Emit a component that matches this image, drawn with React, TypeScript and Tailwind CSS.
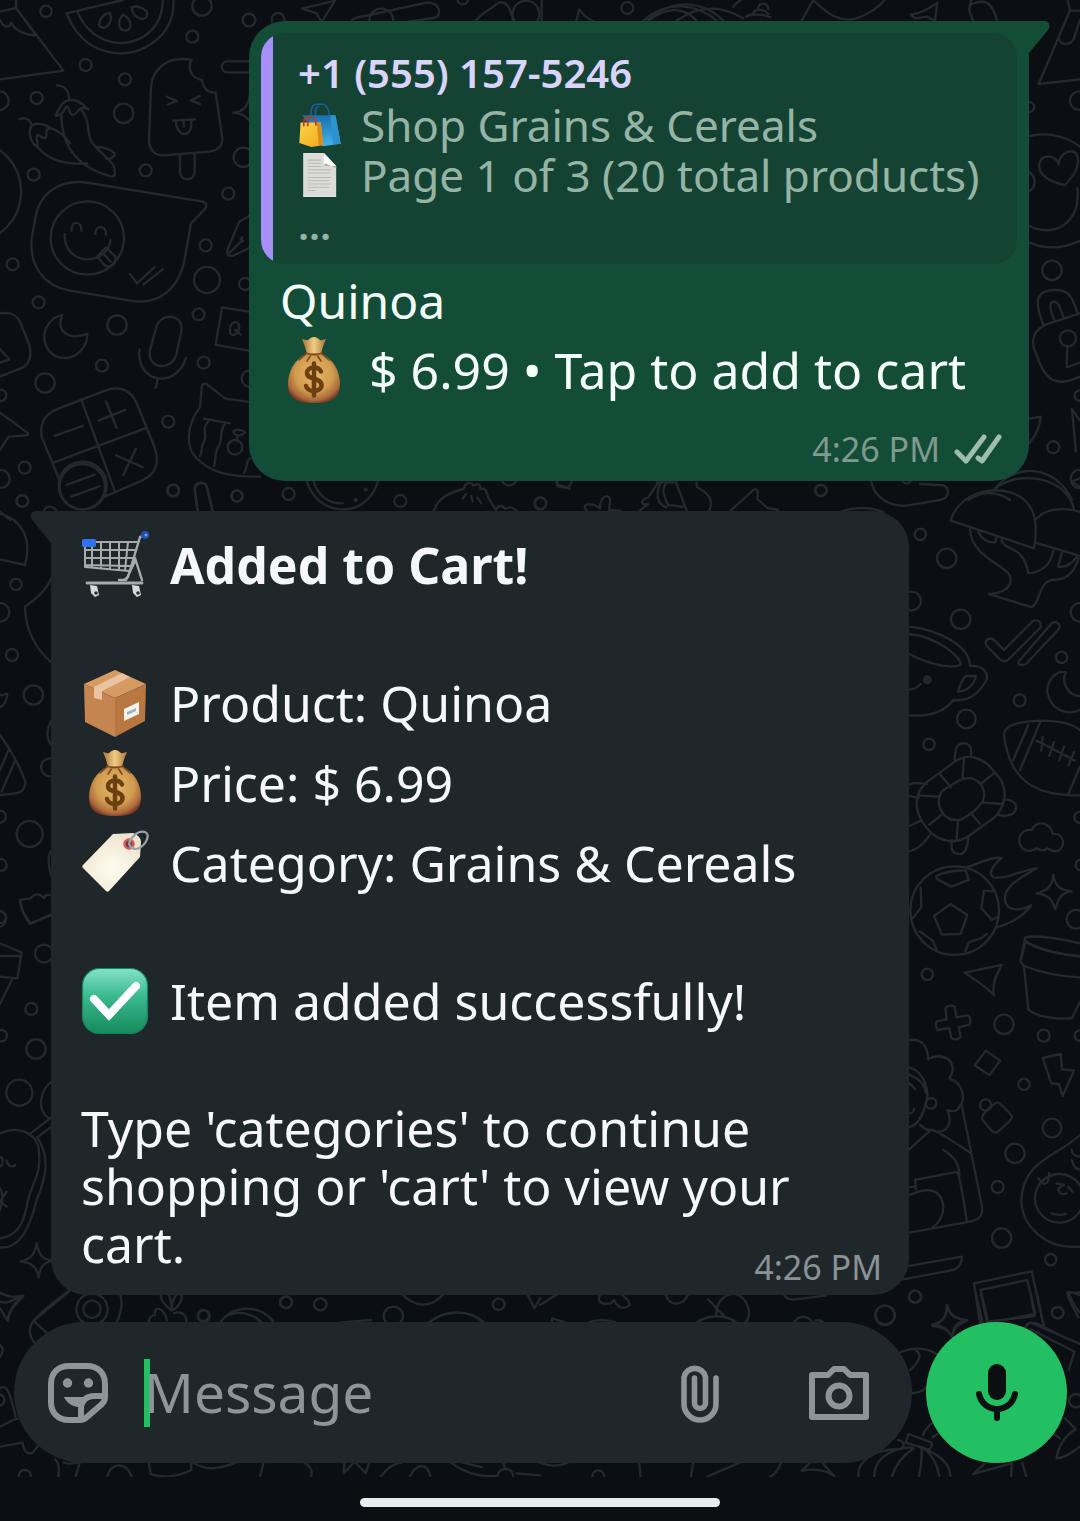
import type { ReactNode } from "react";

/* ---------- Wallpaper ---------- */

type Sheet = {
  transform: string;
  circles: [number, number, number][];
  lines: string[];
};

const sheets: Sheet[] = [
  {
    transform: "translate(0 0) scale(0.3333)",
    circles: [
      [138, 34, 17], [606, 18, 29], [747, 60, 19], [577, 110, 18], [257, 195, 18], [375, 238, 18],
      [110, 294, 18], [-2, 302, 28], [371, 340, 29], [437, 511, 18], [101, 524, 18], [730, 472, 29],
      [685, 581, 18], [617, 736, 18], [38, 793, 18], [621, 840, 39], [735, 852, 18], [116, 907, 18],
      [596, 943, 18], [351, 975, 29], [306, 1097, 18], [611, 1088, 18], [135, 1149, 29], [750, 1136, 25],
      [2, 1186, 17], [505, 1265, 18], [74, 1403, 18], [2, 1437, 27], [519, 1472, 18], [711, 1488, 16],
      [67, 1503, 18], [262, 714, 110], [705, 1342, 22], [248, 1457, 72], [-90, 575, 153], [150, 1540, 20],
    ],
    lines: [
      "M48 -5V24L190 212L0 238M0 34L48 24M48 24L108 106C75 105 45 92 34 68C28 86 12 84 0 60",
      "M368 0L200 40C255 180 385 170 430 145C495 115 525 60 520 -5M232 34C270 125 360 150 430 110C470 85 490 50 488 -5",
      "M331 40C310 38 295 62 298 78C316 92 338 72 331 40M370 44C352 60 352 92 377 92C402 88 392 56 370 44M395 22C398 52 428 66 440 50C450 30 415 14 395 22",
      "M575 180C560 205 575 235 606 240C610 265 625 278 647 278L667 415C668 440 650 452 630 455L488 466C462 466 448 445 447 425L453 260C458 210 500 165 575 180M540 464V515C540 545 584 545 584 515V460",
      "M500 290L530 303L504 314M600 288L572 301L600 312M520 362L585 358M528 364C528 410 578 420 574 362M550 360L552 380",
      "M170 256C195 256 208 275 207 298M167 348C180 320 188 300 215 300C245 300 255 322 264 328C235 312 232 345 220 345C206 345 210 320 200 320C190 326 195 345 167 348M184 346C186 450 240 505 335 530C350 530 345 512 340 495C305 450 265 440 265 385C262 355 255 340 242 328",
      "M58 358C75 350 90 358 96 376M110 440C85 420 80 376 108 372C130 370 142 378 155 386C132 382 142 405 138 412C126 422 120 400 112 406C105 415 118 430 110 440M112 440C145 480 200 495 262 490M150 384C180 392 195 410 210 430M292 440C325 445 345 455 344 466C335 475 325 478 318 476",
      "M268 549L604 604C622 606 621 618 615 627L573 670L555 772C538 870 475 915 395 903L206 871C130 858 88 795 95 715L106 655C118 575 185 535 268 549",
      "M215 692C212 660 246 662 244 692M286 702C284 674 320 674 318 704M194 702C192 750 225 778 262 778C300 778 330 752 331 720M292 770L318 742L346 770C350 795 330 806 314 796ZM314 766L332 785M390 822L411 850L463 802M430 854L488 808",
      "M187 946C168 985 196 1025 262 1002C262 1045 228 1074 194 1074C150 1074 120 1030 138 985C150 960 165 948 187 946",
      "M468 985C478 935 555 940 544 995L530 1060C518 1115 440 1110 450 1050ZM418 1048C410 1155 530 1165 558 1074M474 1134L467 1164",
      "M747 935L666 922L647 1035L747 1052M690 995C688 965 715 955 718 980C715 1010 690 1010 690 995M706 990L722 1004",
      "M750 280C745 315 735 335 700 338C720 340 738 348 747 360M747 184H682C660 184 660 217 682 217H747",
      "M747 648L718 665L682 750C680 768 690 770 702 766L747 745M685 762L728 720M728 712A6 6 0 1 0 730 724",
      "M0 940C35 935 55 950 62 970L88 1035C98 1075 85 1098 55 1108L0 1130M0 1048L28 1078L0 1088",
      "M185 1222L315 1172C360 1155 395 1172 410 1210L465 1345C480 1390 465 1425 425 1442L315 1490M178 1440L125 1310C118 1260 140 1238 185 1222M245 1202L345 1475M160 1388L435 1285M164 1308L248 1278M295 1262L376 1230M318 1204L350 1284M348 1366L428 1402M408 1346L370 1425M200 1455L284 1424M214 1490L298 1459",
      "M747 1206L676 1196L620 1152C608 1148 606 1155 605 1165L600 1222C560 1275 555 1340 590 1375C630 1415 680 1432 780 1430M612 1256L690 1270M628 1260C600 1290 625 1300 612 1325C600 1345 610 1350 600 1368M676 1270C655 1300 670 1310 658 1335C640 1360 650 1380 642 1398M700 1295C710 1285 730 1290 736 1298C720 1310 706 1310 700 1295M712 1312V1324M750 1375C735 1385 745 1400 732 1420",
      "M0 1238L82 1298C86 1304 84 1306 78 1306L26 1310L0 1350M0 1535L30 1560M594 1535L584 1462C590 1445 612 1443 620 1460L638 1535",
    ],
  },
  {
    transform: "translate(240 0) scale(0.3333)",
    circles: [
      [27, 60, 19], [114, 58, 19], [1162, 24, 18], [668, -3, 16], [424, 62, 36], [858, 42, 40],
    ],
    lines: [
      "M186 26L285 2L245 66L230 40ZM335 62C345 50 360 50 375 48L560 8C600 4 610 50 580 54L500 66",
      "M705 66C720 40 750 30 775 8C800 0 815 30 820 66M905 -5V66M1008 66L1018 28C1030 45 1045 58 1062 64M1210 62L1260 34C1310 5 1390 0 1450 62M1225 62C1280 20 1330 20 1370 62",
    ],
  },
  {
    transform: "translate(640 0) scale(0.3333)",
    circles: [
      [1168, 321, 15], [1318, 302, 28], [1236, 811, 29], [1320, 1187, 16], [1240, 1342, 18], [1320, 1437, 28],
      [1284, 1015, 24], [542, 1471, 17], [1150, 545, 34],
    ],
    lines: [
      "M10 62C80 0 170 10 230 62M110 62C190 5 260 25 310 55M280 20C290 8 300 0 310 -5M318 50C335 40 370 42 392 52M338 42C345 25 370 25 385 42M355 22C360 5 385 8 385 28M485 62L520 0C560 40 600 70 650 55C690 40 720 20 738 -5",
      "M812 44C845 40 870 25 892 8L885 62L860 50L825 55ZM1000 62C975 15 990 10 1025 5C1050 5 1062 30 1072 62M990 12L996 -5M1282 -5L1290 32L1196 252L1320 238M1290 32H1320M1256 110C1255 140 1300 140 1305 105L1320 60",
      "M1168 408C1230 395 1290 410 1330 450M1168 678C1240 715 1325 670 1312 565M1168 728C1220 750 1275 745 1325 720M1275 555C1220 545 1185 515 1202 480C1220 460 1250 470 1256 493C1260 460 1290 445 1308 460C1325 490 1305 525 1275 555",
      "M1210 974C1180 900 1190 870 1245 870C1290 870 1295 890 1312 936M1242 958C1225 915 1230 905 1245 905C1258 908 1262 930 1270 950M1320 940L1215 975C1175 995 1172 1030 1190 1065C1215 1140 1245 1165 1320 1130M1282 1038L1280 1102L1320 1088",
      "M1168 1256L1202 1250C1200 1280 1185 1310 1168 1330M1320 1262L1296 1228L1308 1355M1060 1472C1130 1380 1250 1400 1296 1500M985 1500C1020 1475 1070 1470 1110 1500",
    ],
  },
  {
    transform: "translate(0 500) scale(0.3333)",
    circles: [
      [67, 3, 17], [48, 253, 17], [0, 337, 28], [36, 465, 18], [100, 585, 29], [150, 802, 27], [0, 950, 18],
      [89, 1002, 39], [2, 1095, 18], [0, 1252, 18], [247, -40, 68],
    ],
    lines: [
      "M0 40C70 60 95 120 75 195L0 178M155 232C140 270 110 295 75 320C75 390 110 450 155 488M0 585C10 590 22 575 22 582C20 605 10 620 0 622",
      "M155 660C138 690 138 720 155 735M0 705C40 760 60 800 76 845C75 880 55 882 0 885M0 810L28 745M5 875L46 780M155 1050C140 1070 145 1100 155 1130M155 1188C145 1180 135 1185 132 1195C115 1175 100 1185 92 1195L60 1200C65 1230 70 1240 92 1270L155 1245",
    ],
  },
  {
    transform: "translate(0 900) scale(0.3333)",
    circles: [
      [-8, 56, 26], [132, 161, 27], [94, 327, 18], [4, 407, 17], [108, 447, 29], [58, 578, 39], [858, 1207, 18],
      [610, 1247, 17], [276, 1228, 47], [276, 1228, 26],
    ],
    lines: [
      "M60 0C65 30 70 45 90 72L155 42M0 130L65 158L52 235L0 230M0 168H64M38 235L0 312M155 545C120 570 115 620 135 645C145 655 150 658 155 655M92 700L150 655M112 712L155 680",
      "M0 700C45 680 100 690 115 740C130 830 90 850 80 920C70 980 40 1010 0 1015M112 712C150 770 140 830 110 900C90 980 60 1050 0 1042M0 770C12 775 10 795 0 800M20 782C22 800 38 802 46 796M0 865C10 880 10 900 0 930M20 875L0 905L20 920",
      "M110 1030C118 1070 130 1078 158 1082C130 1088 120 1100 116 1132C110 1100 95 1088 62 1084C95 1078 105 1060 110 1030M0 1178C30 1195 50 1190 70 1188C40 1210 28 1230 22 1260M102 1260C140 1220 170 1200 210 1170",
    ],
  },
  {
    transform: "translate(170 474) scale(0.3333)",
    circles: [[10, 49, 17], [201, 66, 17], [356, 60, 18], [691, 81, 18], [1111, 88, 18], [1018, 10, 24]],
    lines: [
      "M82 110L74 46C80 22 108 22 112 42L128 110M410 20C440 130 590 140 625 20M430 20C445 70 480 90 518 88M588 44A3 3 0 1 0 590 46M558 75A3 3 0 1 0 560 77",
      "M792 110C805 70 840 55 880 45C890 20 905 25 910 35C930 25 930 35 932 45C955 40 945 60 960 80L978 108C985 90 1000 95 1005 105C1020 95 1030 100 1040 110M878 74L888 60M908 82L904 66M934 88L922 70M1160 24L1162 36L1200 44",
    ],
  },
  {
    transform: "translate(540 474) scale(0.3333)",
    circles: [[2, 88, 17], [843, 50, 17], [1100, 12, 16]],
    lines: [
      "M52 22L54 32L85 42L95 24M140 110C120 90 155 82 180 104C180 85 185 70 198 66C220 70 205 90 208 108L240 110M300 110C305 100 325 95 325 90C300 95 300 78 325 70L355 25M365 20C345 60 350 90 380 100M380 25C360 50 375 70 385 95C400 90 410 100 430 98M410 30L440 110M470 25V38C510 60 520 80 508 110M350 25H410",
      "M572 110L640 48C655 40 655 55 652 75L682 102L715 108M905 112C950 98 990 98 1030 114",
    ],
  },
  {
    transform: "translate(860 480) scale(0.3333)",
    circles: [
      [181, 163, 17], [260, 235, 29], [155, 363, 28], [302, 418, 29], [660, 397, 28], [605, 532, 17], [479, 661, 18],
      [319, 717, 28], [207, 793, 17], [660, 1012, 17], [664, 1155, 17], [648, 1318, 28], [284, 1292, 133],
      [202, 599, 10], [202, 599, 4],
    ],
    lines: [
      "M34 5C45 55 90 80 140 77L240 60C270 55 270 25 250 16L180 12M400 34C450 -30 620 -20 642 88M660 -5L635 5L660 20M272 122C300 20 460 0 510 80C530 110 530 160 522 205ZM525 120C560 80 620 85 660 95M526 188L660 228",
      "M330 148C335 240 455 255 452 300C450 330 420 340 386 342L512 381C540 380 535 300 580 300C630 300 645 265 656 235M355 156C365 180 385 188 406 188L410 172M425 180C430 215 490 190 505 280C560 275 575 240 580 212M606 218L594 260C620 265 640 245 650 232",
      "M380 498C370 480 390 470 402 480L432 510L518 424C535 415 548 430 540 444L444 540C435 548 428 545 420 538ZM478 542L575 430C590 420 605 435 596 448L498 552C480 560 470 550 478 542M618 577C590 570 560 600 562 635C570 685 615 710 660 690M618 577C600 610 630 650 660 648",
      "M148 440C240 450 330 500 330 558C365 555 385 575 380 600C350 650 320 665 280 660C250 700 200 710 148 706M148 462C230 470 305 530 302 555C260 570 190 545 148 522M318 588H348C340 620 315 635 294 635C300 615 305 600 318 588M148 628C165 628 175 620 182 612",
      "M432 770C430 735 470 725 545 722C600 722 640 735 660 750M432 770C450 890 510 950 660 946M505 735L460 840M540 728L480 870M625 942L660 860M530 782L645 842M548 770L544 812M582 786L568 828M612 800L598 842M642 816L626 856",
      "M196 910L285 845C320 820 360 830 390 860L420 895C445 935 435 985 400 1015L330 1065C290 1095 240 1085 210 1055C165 1010 155 950 196 910M250 930L300 900C350 880 385 925 368 965C350 990 335 1000 305 1018C260 1030 225 985 240 945C243 938 246 934 250 930M312 838L308 892M240 882L272 922M402 880L364 910M430 972L370 968M360 1032L332 998M290 1080L294 1020M208 1034L244 1005M176 946L236 950",
      "M284 840C285 805 290 790 312 790C335 792 335 810 332 830M430 960C455 955 470 970 468 985C465 1005 440 1012 414 1004M325 1072C322 1105 315 1125 295 1122C275 1120 272 1105 276 1080M148 914C158 906 175 908 200 912M148 948L176 954M148 1038L182 1022M212 1062C190 1095 170 1110 148 1114",
      "M496 1110C465 1095 475 1045 515 1050C530 1020 570 1025 578 1062C610 1058 620 1095 595 1112C580 1118 570 1110 562 1105C550 1115 540 1112 530 1105C520 1112 505 1115 496 1110M320 1162C360 1150 390 1130 425 1134C405 1150 380 1180 400 1192C440 1200 480 1170 530 1165C480 1195 430 1220 435 1260C440 1300 490 1290 514 1276C490 1310 450 1330 412 1342",
      "M580 1184C585 1215 595 1230 635 1234C600 1240 595 1255 586 1288C575 1255 565 1245 530 1240C565 1232 578 1215 580 1184M272 1272L322 1305L302 1362L246 1364L222 1308ZM228 1190C250 1175 290 1170 318 1172L326 1200L274 1220L232 1198ZM182 1222L184 1282L158 1315M372 1232L398 1234M372 1232L364 1285L396 1320L412 1310M180 1355L218 1382L232 1414M380 1362C360 1385 340 1375 325 1390L316 1414",
      "M482 1440L496 1372C530 1365 600 1375 660 1390M496 1385C540 1410 610 1425 660 1430",
    ],
  },
  {
    transform: "translate(860 940) scale(0.3333)",
    circles: [
      [202, 103, 17], [432, 253, 29], [551, 287, 18], [660, 287, 16], [492, 433, 17], [576, 564, 28], [465, 640, 29],
      [413, 741, 18], [425, 894, 29], [572, 959, 17], [165, 1070, 18], [75, 1126, 29], [593, 1118, 17], [213, 490, 16],
      [377, 495, 17], [598, 775, 73],
    ],
    lines: [
      "M314 98L425 75C415 100 395 120 402 166C380 140 345 120 314 98M496 5C550 35 600 42 660 48M496 5L482 65L492 78C550 100 610 110 660 112M492 78L505 208C530 232 600 240 636 234L660 185",
      "M256 205C262 195 280 195 284 200L290 232L322 226C332 230 334 245 328 254L296 262L302 292C295 300 280 300 274 294L268 264L234 270C226 265 226 250 230 244L260 238ZM378 332L420 362L388 406L344 376ZM548 354L602 342L606 388L642 392L608 468L596 432L574 430Z",
      "M386 505L405 490C415 485 420 490 428 498L454 525C458 532 455 535 448 544L415 574C408 580 402 578 395 572L368 540C362 532 368 522 386 505M148 300C185 295 205 320 204 358C250 330 300 370 268 415C310 430 320 480 295 505C290 515 275 515 262 510C280 550 260 575 235 575",
      "M148 382C190 395 215 450 195 500C185 535 170 555 148 562M148 404C175 415 195 435 198 458M148 430C155 435 160 440 165 448M148 520C158 520 162 512 162 506M180 555L200 570C220 565 235 575 330 638M148 628L210 572M305 495L366 800C370 830 355 840 330 845L148 878M165 720L290 696C300 700 320 840 320 840M250 630C285 650 300 680 298 710M148 742L162 740M165 718L168 748M148 766C200 740 245 745 250 800C250 830 235 850 218 862",
      "M148 978L305 950C308 975 290 990 270 992L130 1018M342 1030L515 994L552 1160M342 1030L362 1160M362 1050L502 1020L526 1122L385 1148ZM362 1050L382 1148M660 585C590 650 490 660 484 780C485 860 560 930 660 920M535 715C545 728 552 735 556 730C570 730 565 705 568 698M590 730L612 735C580 745 600 770 620 760M625 740L638 755M575 820C590 826 605 826 618 822M635 628C635 645 650 650 660 650M636 660C640 680 650 688 660 688",
      "M262 1098C270 1125 280 1135 320 1140C290 1148 280 1160 276 1190C260 1165 245 1155 216 1155C250 1145 260 1130 262 1098M660 1065C645 1060 625 1052 622 1060C625 1080 640 1100 655 1132M498 1160C500 1145 520 1145 540 1155L600 1185",
    ],
  },
  {
    transform: "translate(0 1290) scale(0.3444 0.3333)",
    circles: [
      [592, 78, 17], [831, 37, 17], [930, 43, 18], [1142, 78, 28], [1448, 43, 17], [72, 558, 18], [-4, 330, 17],
    ],
    lines: [
      "M0 35C25 45 45 22 68 18C50 40 30 50 22 92L0 55M205 0L95 95C80 120 85 140 102 160M100 95L135 128M348 10C358 40 352 70 338 98M498 62C460 30 460 5 480 8C495 12 498 40 498 62C498 35 510 5 525 12C535 30 515 55 498 62M485 92C475 50 445 45 450 75C440 75 430 85 432 98M505 70C530 60 545 80 540 98",
      "M640 98C670 45 760 40 795 98M665 75C700 60 740 75 760 98M985 98L1078 90M1165 10C1200 50 1250 60 1290 10M1245 98C1290 60 1360 55 1405 98M1530 10L1552 55L1568 25",
      "M0 165C12 175 8 190 0 200M0 295C20 280 30 310 45 380M0 410C20 400 35 390 52 386M0 470L65 458C70 485 80 495 95 488L110 468M160 508C175 525 170 540 170 560M185 518C200 525 215 520 232 516L220 560M312 560C320 515 370 515 382 560M432 520L438 552C470 565 520 560 555 540V518M560 518C600 545 640 535 685 518M765 518L755 560M885 518C905 535 908 545 903 560M1000 518L998 550L1030 515L1062 550L1072 518",
      "M1105 560C1120 540 1140 520 1165 518M1190 560C1210 520 1240 515 1250 560M1310 518C1360 560 1420 560 1440 558M1345 518L1400 532M1445 558C1445 530 1490 530 1490 558M1462 518L1465 532M1500 550L1568 556",
    ],
  },
  {
    transform: "translate(540 1290) scale(0.3444 0.3333)",
    circles: [[1002, 75, 28], [1089, 20, 18], [1503, 68, 17], [1556, 332, 20], [169, 558, 17]],
    lines: [
      "M0 45L55 10M175 12C165 35 175 45 205 40L215 30C225 55 245 60 260 45C260 30 245 20 235 12M365 14C375 50 415 50 430 14M32 98L36 85L70 96M140 98C160 88 200 88 220 98M488 28C510 50 520 65 535 78M512 78C510 30 540 10 570 12C610 30 615 80 595 98M455 98C490 70 545 75 570 98M710 16C720 35 740 30 830 16M738 98C750 75 780 75 790 98M800 92C815 88 820 92 825 98",
      "M1182 45C1190 75 1200 85 1240 92C1210 105 1200 115 1198 140C1185 120 1175 112 1140 108C1175 95 1180 75 1182 45M1265 10L1285 98M1280 10L1298 95L1436 78L1425 10M1442 10L1462 105M1410 110L1425 98L1568 162M1425 118L1552 185L1535 240M1535 10C1545 35 1555 55 1568 68M1532 8H1568",
      "M1040 190C1080 170 1130 170 1160 200M1090 180C1115 195 1095 220 1075 240M1075 310C1100 310 1115 300 1125 290M1040 450C1060 455 1060 470 1045 478C965 475 920 520 925 558M1070 432L1138 458C1138 475 1130 480 1120 476L1062 458ZM1098 470C1160 490 1190 520 1192 560M1080 472C1000 475 970 520 970 560M1085 475C1050 500 1030 530 1022 560M1108 475C1110 510 1105 540 1100 560M1115 475C1145 500 1155 530 1160 560M1112 435C1120 415 1130 405 1145 395M1140 442L1165 425",
      "M1258 552L1370 520L1368 558M1258 552L1290 522M1400 518L1412 560M1525 385L1555 418C1520 440 1505 470 1500 505C1530 505 1550 480 1568 470M1490 430L1510 445M0 518C30 530 60 528 80 518M288 518L292 560M445 518L438 560M486 560L580 518M700 518C690 545 680 555 668 560M785 518L760 542C800 535 830 540 855 558C840 545 830 530 820 518",
    ],
  },
];

function Wallpaper() {
  return (
    <svg
      aria-hidden="true"
      viewBox="0 0 1080 1477"
      preserveAspectRatio="xMinYMin slice"
      className="absolute inset-0 size-full"
      fill="none"
      stroke="#24292d"
      strokeWidth={7}
      strokeLinecap="round"
      strokeLinejoin="round"
    >
      {sheets.map((s) => (
        <g key={s.transform} transform={s.transform}>
          {s.circles.map(([x, y, r]) => (
            <circle key={`${x},${y},${r}`} cx={x} cy={y} r={r} />
          ))}
          {s.lines.map((d) => (
            <path key={d} d={d} />
          ))}
        </g>
      ))}
    </svg>
  );
}

/* ---------- Emoji ---------- */

function Emoji({ label, small, children }: { label: string; small?: boolean; children: ReactNode }) {
  return (
    <svg role="img" aria-label={label} viewBox="0 0 68 68" className={small ? "size-[44px] shrink-0" : "size-[68px] shrink-0"}>
      {children}
    </svg>
  );
}

function MoneyBag() {
  return (
    <Emoji label="Money bag">
      <defs>
        <radialGradient id="bag" cx="0.5" cy="0.42" r="0.6">
          <stop offset="0" stopColor="#e6b869" />
          <stop offset="0.6" stopColor="#d19c50" />
          <stop offset="0.88" stopColor="#a9683a" />
          <stop offset="1" stopColor="#7c3a25" />
        </radialGradient>
        <linearGradient id="neck" x1="0" x2="1" y1="0" y2="0">
          <stop offset="0" stopColor="#a87338" />
          <stop offset="0.5" stopColor="#f0cd84" />
          <stop offset="1" stopColor="#a87338" />
        </linearGradient>
      </defs>
      <path d="M22 3c3 0 4 2 6 1 2-2 4-3 6-3s4 1 6 3c2 1 3-1 6-1-2 5-4 9-5 16H27C26 12 24 8 22 3Z" fill="url(#neck)" />
      <path d="M28 17C14 23 8 36 8 48c0 14 8 19 26 19s26-5 26-19c0-12-6-25-20-31Z" fill="url(#bag)" />
      <path d="M26 17c5 2 11 2 16 0M26 18l-7 6M31 19l-4 6M37 19l4 6M42 18l7 6" fill="none" stroke="#7b4a22" strokeWidth="1.6" strokeLinecap="round" />
      <path d="M41 35.500c-1.500-3-4-4-7-4-4 0-7 2-7 5.500 0 7.500 14.500 4 14.500 12 0 4-3.500 6-7.500 6-4 0-7-1.500-8-5M34 27.500v32" fill="none" stroke="#6b3f10" strokeWidth="4.500" strokeLinecap="round" />
    </Emoji>
  );
}

function ShoppingBags() {
  return (
    <Emoji label="Shopping bags" small>
      <defs>
        <linearGradient id="blueBag" x1="0" x2="0" y1="0" y2="1">
          <stop offset="0" stopColor="#1a6fae" />
          <stop offset="1" stopColor="#41b4ea" />
        </linearGradient>
        <linearGradient id="yellowBag" x1="0" x2="1" y1="0" y2="1">
          <stop offset="0" stopColor="#f9d648" />
          <stop offset="1" stopColor="#f3a81d" />
        </linearGradient>
      </defs>
      <path d="M20 20c0-14 3-18 9-18h9c6 0 9 5 11 18M27 19c0-12 2-14 6-14" fill="none" stroke="#1c5c9c" strokeWidth="2.400" />
      <path d="M7 19h51l8 44-28 4Z" fill="url(#blueBag)" />
      <path d="M50 19h8l8 44-12 1Z" fill="#2c93cf" />
      <path d="M4 30h31l4 35-18 3-19-6Z" fill="url(#yellowBag)" />
      <path d="M29 30h6l4 35-7 1Z" fill="#d98d16" />
      <path d="M9 36c-1-10 1-14 6-14h6c5 0 6 4 7 13M15 36c0-8 1-11 3-12" fill="none" stroke="#c2361d" strokeWidth="2.600" />
    </Emoji>
  );
}

function PageEmoji() {
  return (
    <Emoji label="Page" small>
      <path d="M8 0h32l19 20v48H8Z" fill="#dcdcda" />
      <path d="M40 0l19 20H44c-3 0-4-1-4-4Z" fill="#fff" />
      <path d="M41 16v4h18v3Z" fill="#a9a9a7" />
      <path d="M15 11h21M15 16h20M15 21h23M15 26h36M15 31h34M15 38h36M15 43h34M15 48h36M15 53h33M15 58h12" stroke="#b9b9b7" strokeWidth="1.600" />
    </Emoji>
  );
}

function CartEmoji() {
  return (
    <Emoji label="Shopping cart">
      <g fill="none" stroke="#a7abad" strokeWidth="2" strokeLinecap="round" strokeLinejoin="round">
        <path d="M3 11h54M4 11v25l44 4M4 19h50M4 27h49M4 34l45 1M11 11v25M20 11v26M29 11v27M38 11v28M47 11l-3 28" />
        <path d="M65 4l-6 2-12 40-4 3h-5M54 27l7 22M54 30l-9 19" strokeWidth="2.400" />
        <path d="M6 52h55" strokeWidth="2.800" />
      </g>
      <rect x="1" y="8" width="14" height="8" rx="1.500" fill="#2f72ee" />
      <circle cx="64" cy="4" r="4" fill="#234fae" />
      <circle cx="65" cy="4" r="1.500" fill="#6c9cf5" />
      <g fill="#d9dadb">
        <path d="M9 54l7 1 2 9-4 2-4-4Z" />
        <path d="M51 54l7 1 2 9-4 2-4-4Z" />
      </g>
      <circle cx="15" cy="62" r="1.800" fill="#2a2e30" />
      <circle cx="57" cy="62" r="1.800" fill="#2a2e30" />
    </Emoji>
  );
}

function PackageEmoji() {
  return (
    <Emoji label="Package">
      <path d="M34 1l31 14-31 14L3 15Z" fill="#d69a63" />
      <path d="M3 15l31 14v39L4 53Z" fill="#c58550" />
      <path d="M65 15L34 29v39l30-16Z" fill="#b87640" />
      <path d="M41 4l8 4-28 14v9l-8-2V18Z" fill="#ecc3a0" />
      <path d="M43 40l15-7v12l-15 7Z" fill="#f6f3ee" />
      <path d="M46 43l9-4v3l-9 4Z" fill="#9fb3bd" />
    </Emoji>
  );
}

function TagEmoji() {
  return (
    <Emoji label="Label">
      <defs>
        <radialGradient id="tag" cx="0.5" cy="0.6" r="0.6">
          <stop offset="0" stopColor="#fffdf0" />
          <stop offset="1" stopColor="#eee4d0" />
        </radialGradient>
      </defs>
      <path d="M32 5l20-1c5 2 8 5 8 9l-1 15-31 34c-1 1-2 1-3 0L2 39c-1-1-1-2 0-3Z" fill="url(#tag)" />
      <circle cx="48" cy="15" r="4.500" fill="#6b3a3c" stroke="#dc5a58" strokeWidth="2.600" />
      <path d="M48 15c2-8 10-14 16-12s1 13-6 16c-4 2-8 1-10-4" fill="none" stroke="#9aa4ad" strokeWidth="2.200" strokeLinecap="round" />
    </Emoji>
  );
}

function CheckEmoji() {
  return (
    <Emoji label="Check mark">
      <defs>
        <linearGradient id="check" x1="0" x2="0" y1="0" y2="1">
          <stop offset="0" stopColor="#86e3c6" />
          <stop offset="0.4" stopColor="#3dbb92" />
          <stop offset="1" stopColor="#158a5d" />
        </linearGradient>
      </defs>
      <rect x="1.500" y="1.500" width="65" height="65" rx="17" fill="url(#check)" stroke="#12875a" strokeWidth="1.200" />
      <path d="M13 32l15 16 27-29" fill="none" stroke="#fff" strokeWidth="8" strokeLinecap="round" />
    </Emoji>
  );
}

/* ---------- Interface icons ---------- */

function StickerIcon() {
  return (
    <svg aria-hidden="true" viewBox="0 0 60 60" className="size-[60px]" fill="none">
      <path d="M21 3h18c11 0 18 7 18 18v13c0 3-1 5-3 7L39 54c-2 2-4 3-7 3H21C10 57 3 50 3 39V21C3 10 10 3 21 3Z" stroke="#8d9599" strokeWidth="6" />
      <circle cx="19.500" cy="20" r="4.700" fill="#8d9599" />
      <circle cx="40.500" cy="20" r="4.700" fill="#8d9599" />
      <path d="M16 34h19c3-3 7-4 11-4h11v6H46c-6 0-10 4-10 10v10h-6V44C23 43 18 39 16 34Z" fill="#8d9599" />
    </svg>
  );
}

function ClipIcon() {
  return (
    <svg aria-hidden="true" viewBox="0 0 38 60" className="h-[60px] w-[38px]" fill="none" stroke="#8d9599" strokeWidth="5.600" strokeLinecap="round">
      <path d="M35 15v26a16 16 0 0 1-32 0V14a11 11 0 0 1 21.500 0v26a5 5 0 0 1-11 0V15" />
    </svg>
  );
}

function CameraIcon() {
  return (
    <svg aria-hidden="true" viewBox="0 0 60 54" className="h-[54px] w-[60px]" fill="none" stroke="#8d9599" strokeWidth="6" strokeLinejoin="round">
      <path d="M3 9h16l6-6h10l6 6h16v42H3Z" />
      <circle cx="30" cy="30" r="10.500" />
    </svg>
  );
}

function MicIcon() {
  return (
    <svg aria-hidden="true" viewBox="0 0 42 58" className="h-[58px] w-[42px]" fill="none" stroke="#0b0f12" strokeWidth="6" strokeLinecap="round">
      <rect x="12" y="0" width="18" height="36" rx="9" fill="#0b0f12" stroke="none" />
      <path d="M3 30c2 9 9 15 18 15s16-6 18-15M21 46v8" />
    </svg>
  );
}

/* ---------- Messages ---------- */

function Line({ emoji, children }: { emoji: ReactNode; children: ReactNode }) {
  return (
    <p className="flex items-center gap-[21px] leading-[80px]">
      {emoji}
      <span className="whitespace-nowrap">{children}</span>
    </p>
  );
}

function QuoteLine({ emoji, children }: { emoji: ReactNode; children: ReactNode }) {
  return (
    <p className="flex items-center gap-[19px] text-[44px] leading-[50px] text-[#95b4a6]">
      {emoji}
      <span className="whitespace-nowrap">{children}</span>
    </p>
  );
}

function OutgoingMessage() {
  return (
    <article className="relative mr-[51px] flex w-full max-w-[780px] flex-col self-end rounded-[36px] rounded-tr-none bg-[#144d37] px-3 pt-3 pb-3 text-[#f5fffa]">
      <svg aria-hidden="true" viewBox="0 0 22 34" className="absolute top-0 -right-[21px] h-[34px] w-[22px]">
        <path d="M0 0h16c5 0 7 5 4 9L1 32H0Z" fill="#144d37" />
      </svg>
      <blockquote className="flex overflow-hidden rounded-[24px] bg-[#154333]">
        <span className="w-3 shrink-0 bg-[#a78ffa]" />
        <div className="flex-1 pt-3 pr-6 pb-[14px] pl-[25px]">
          <p className="text-[40px] leading-[55px] font-semibold text-[#dad3fb]">+1 (555) 157-5246</p>
          <QuoteLine emoji={<ShoppingBags />}>Shop Grains &amp; Cereals</QuoteLine>
          <QuoteLine emoji={<PageEmoji />}>Page 1 of 3 (20 total products)</QuoteLine>
          <p className="text-[40px] leading-[50px] font-semibold text-[#95b4a6]">...</p>
        </div>
      </blockquote>
      <div className="mt-2 px-[19px] text-[50px]">
        <p className="text-[48px] leading-[58px]">Quinoa</p>
        <Line emoji={<MoneyBag />}>$ 6.99 • Tap to add to cart</Line>
      </div>
      <footer className="mt-[19px] mr-[15px] flex items-center gap-[14px] self-end text-[34px] leading-[40px] text-[#7f9a8f]">
        <time>4:26 PM</time>
        <svg role="img" aria-label="Delivered" viewBox="0 0 48 30" className="h-[30px] w-[48px]" fill="none" stroke="#9fbcb0" strokeWidth="5" strokeLinecap="round" strokeLinejoin="round">
          <path d="M3 18l9 9L30 3M24 24l4 3L45 3" />
        </svg>
      </footer>
    </article>
  );
}

function IncomingMessage() {
  return (
    <article className="relative mt-[30px] ml-[51px] flex w-full max-w-[858px] flex-col rounded-[36px] rounded-tl-none bg-[#20272a] px-[30px] pt-[14px] pb-2 text-[50px] text-[#f5f7fa]">
      <svg aria-hidden="true" viewBox="0 0 22 34" className="absolute top-0 -left-[21px] h-[34px] w-[22px]">
        <path d="M22 0H6C1 0-1 5 2 9l19 23h1Z" fill="#20272a" />
      </svg>
      <Line emoji={<CartEmoji />}>
        <strong className="font-bold">Added to Cart!</strong>
      </Line>
      <div className="mt-[58px]">
        <Line emoji={<PackageEmoji />}>Product: Quinoa</Line>
        <Line emoji={<MoneyBag />}>Price: $ 6.99</Line>
        <Line emoji={<TagEmoji />}>Category: Grains &amp; Cereals</Line>
      </div>
      <div className="mt-[58px]">
        <Line emoji={<CheckEmoji />}>Item added successfully!</Line>
      </div>
      <p className="mt-[58px] max-w-[760px] leading-[58px]">
        Type 'categories' to continue shopping or 'cart' to view your cart.
      </p>
      <time className="-mt-[26px] -mr-[3px] self-end text-[34px] leading-[40px] text-[#8b9296]">4:26 PM</time>
    </article>
  );
}

function Composer() {
  return (
    <form className="mt-[27px] flex items-center gap-[14px] pr-[13px] pl-[14px]" onSubmit={(e) => e.preventDefault()}>
      <div className="flex h-[141px] min-w-0 flex-1 items-center rounded-full bg-[#20272a] pr-[43px] pl-[34px]">
        <button type="button" aria-label="Stickers" className="shrink-0">
          <StickerIcon />
        </button>
        <span aria-hidden="true" className="ml-9 h-[68px] w-[6px] shrink-0 bg-[#22c063]" />
        <input
          type="text"
          aria-label="Message"
          placeholder="Message"
          className="-ml-[6px] h-[80px] min-w-0 flex-1 bg-transparent text-[55px] text-[#f5f7fa] outline-none placeholder:text-[#8d9599]"
        />
        <button type="button" aria-label="Attach" className="shrink-0">
          <ClipIcon />
        </button>
        <button type="button" aria-label="Camera" className="ml-[90px] shrink-0">
          <CameraIcon />
        </button>
      </div>
      <button type="button" aria-label="Record voice message" className="flex size-[141px] shrink-0 items-center justify-center rounded-full bg-[#22c063]">
        <MicIcon />
      </button>
    </form>
  );
}

export default function App() {
  return (
    <div className="flex min-h-screen flex-col overflow-hidden bg-[#0b0f13] font-['Noto_Sans',sans-serif]">
      <main className="relative overflow-hidden pb-[14px]">
        <Wallpaper />
        <div className="relative flex flex-col pt-[21px]">
          <OutgoingMessage />
          <IncomingMessage />
          <Composer />
        </div>
      </main>
      <div className="flex h-[44px] items-center justify-center pt-[6px]">
        <span className="h-[9px] w-1/3 rounded-full bg-[#e9ebed]" />
      </div>
    </div>
  );
}
